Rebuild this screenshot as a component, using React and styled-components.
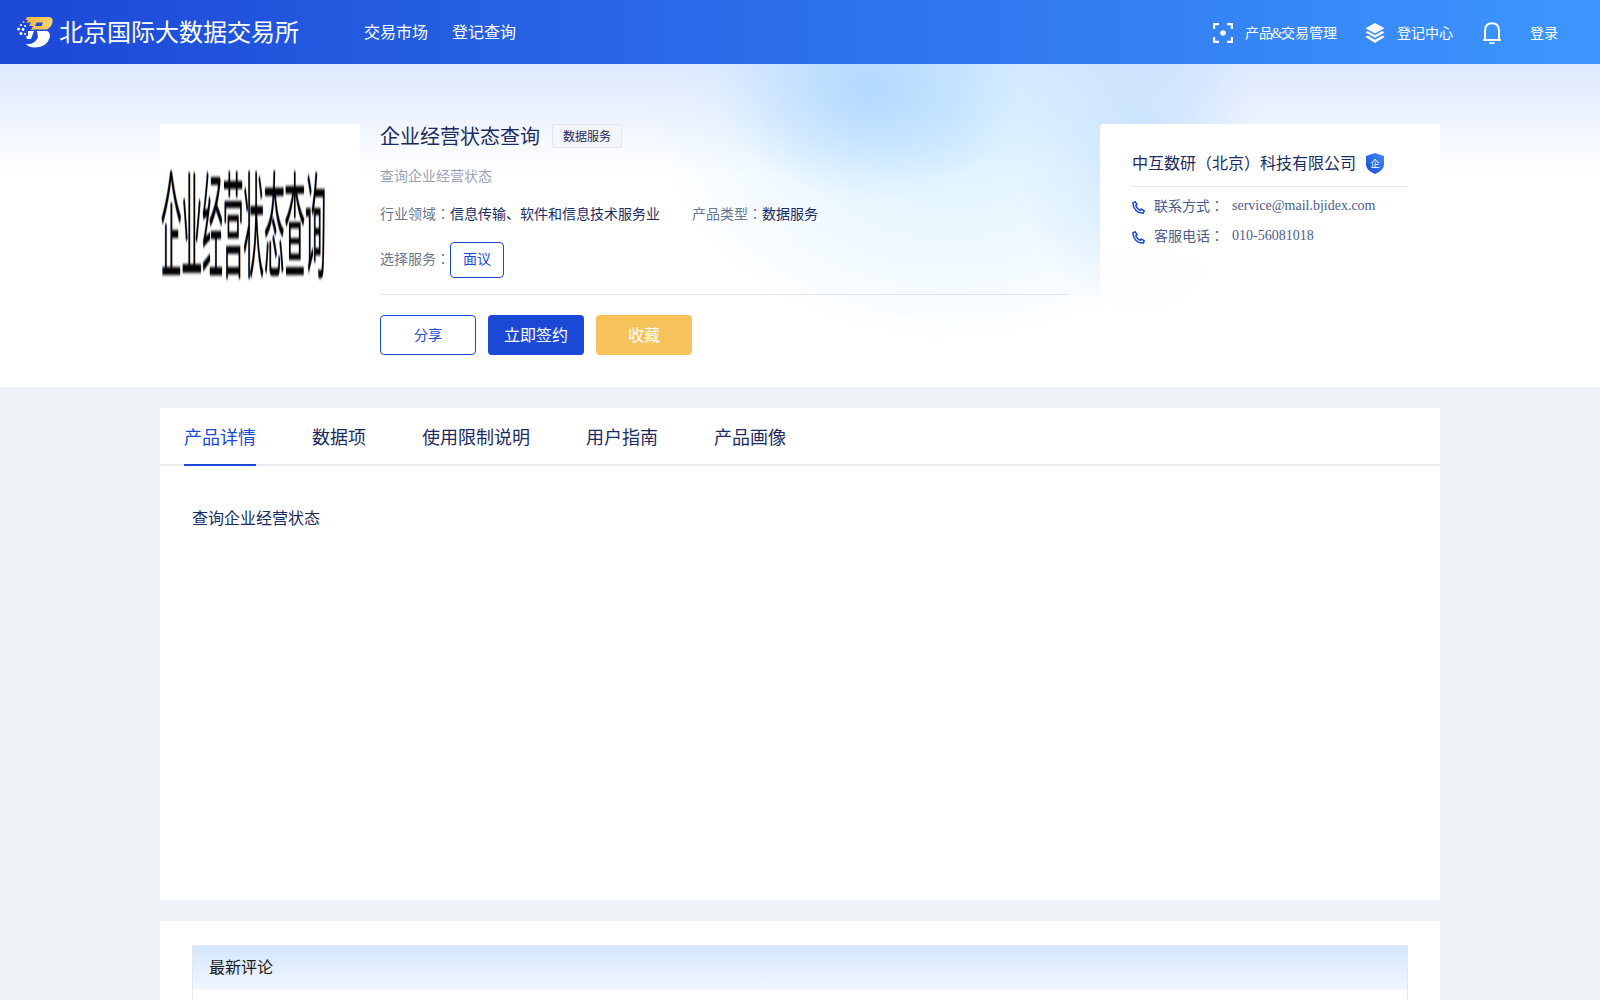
import React from "react";
import styled, { createGlobalStyle } from "styled-components";

const Global = createGlobalStyle`
  html, body { margin: 0; padding: 0; background: #eff3f8; }
  body { font-family: "Liberation Serif", "Noto Sans CJK JP", serif; overflow-x: hidden; }
  ::-webkit-scrollbar { display: none; }
`;

const Page = styled.div`
  width: 1600px;
  height: 1000px;
  overflow: hidden;
`;

const Header = styled.header`
  height: 64px;
  display: flex;
  align-items: center;
  padding: 0 42px 0 17px;
  background: linear-gradient(90deg, #1c48d6 0%, #3d96ff 100%);
  color: #fff;
`;
const Brand = styled.div`
  display: flex;
  align-items: center;
  gap: 6px;
  font-size: 24px;
  width: 347px;
`;
const BrandName = styled.span`
  padding-bottom: 4px;
`;
const Nav = styled.nav`
  display: flex;
  gap: 24px;
  font-size: 16px;
  padding-bottom: 2px;
`;
const Tools = styled.div`
  margin-left: auto;
  display: flex;
  align-items: center;
  font-size: 14px;
`;
const Tool = styled.div`
  display: flex;
  align-items: center;
  gap: 12px;
  margin-left: ${(p) => p.$left || 0}px;
  svg {
    display: block;
    margin-top: 2px;
  }
`;
const Amp = styled.span`
  margin: 0 -1.5px;
`;

const Hero = styled.section`
  height: 323px;
  box-sizing: border-box;
  padding-top: 60px;
  background:
    radial-gradient(ellipse 150px 110px at 868px 25px, rgba(170, 212, 255, 0.8), rgba(170, 212, 255, 0) 100%),
    radial-gradient(ellipse 300px 230px at 950px 50px, rgba(200, 234, 255, 0.75), rgba(200, 234, 255, 0) 100%),
    radial-gradient(ellipse 125px 165px at 1140px 90px, rgba(178, 210, 255, 0.62), rgba(178, 210, 255, 0) 100%),
    linear-gradient(180deg, #dde8fe 0%, #ffffff 34%);
`;
const HeroInner = styled.div`
  width: 1280px;
  margin: 0 auto;
  display: flex;
`;
const Cover = styled.div`
  width: 200px;
  height: 200px;
  margin-right: 20px;
  flex: none;
  background: #fff;
  border-radius: 4px;
  display: flex;
  align-items: center;
  overflow: hidden;
`;
const CoverText = styled.span`
  display: block;
  font-size: 20.6px;
  line-height: 1;
  white-space: nowrap;
  color: #000;
  font-family: "Noto Sans CJK JP", sans-serif;
  margin-left: 1px;
  transform: translateY(-4px) scale(1, 5.65);
  text-shadow: -0.4px 0 rgba(0, 110, 255, 0.45), 0.4px 0 rgba(255, 130, 0, 0.45);
  filter: blur(0.3px);
`;
const Info = styled.div`
  width: 688px;
  flex: none;
`;
const TitleRow = styled.div`
  height: 24px;
  display: flex;
  align-items: center;
  gap: 12px;
`;
const Title = styled.h1`
  margin: 0;
  padding-bottom: 2px;
  font-size: 20px;
  font-weight: 400;
  color: #1c2c63;
`;
const Tag = styled.span`
  box-sizing: border-box;
  height: 24px;
  padding: 0 10px;
  display: flex;
  align-items: center;
  font-size: 12px;
  color: #1c2c63;
  background: #f4f5f9;
  border: 1px solid #e5e7ee;
  border-radius: 2px;
`;
const Desc = styled.p`
  margin: 19px 0 0;
  height: 20px;
  line-height: 20px;
  font-size: 14px;
  color: #9aa2b8;
`;
const Meta = styled.div`
  margin-top: 18px;
  height: 20px;
  line-height: 20px;
  display: flex;
  gap: 32px;
  font-size: 14px;
  color: #6b7693;
`;
const Value = styled.span`
  color: #1c2c63;
`;
const ServiceRow = styled.div`
  margin-top: 17px;
  display: flex;
  align-items: center;
  font-size: 14px;
  color: #6b7693;
`;
const ServiceLabel = styled.span`
  padding-bottom: 4px;
`;
const Chip = styled.span`
  box-sizing: border-box;
  width: 54px;
  height: 36px;
  padding-bottom: 4px;
  display: flex;
  align-items: center;
  justify-content: center;
  border: 1px solid #1c48d6;
  border-radius: 4px;
  color: #1c48d6;
  background: #fff;
`;
const Rule = styled.div`
  height: 1px;
  margin-top: 16px;
  background: #e4e6ec;
`;
const Actions = styled.div`
  margin-top: 20px;
  display: flex;
  gap: 12px;
`;
const Action = styled.button`
  box-sizing: border-box;
  width: 96px;
  height: 40px;
  padding: 0 0 2px;
  font-family: inherit;
  font-size: ${(p) => (p.$kind === "outline" ? 14 : 16)}px;
  border-radius: 4px;
  border: ${(p) => (p.$kind === "outline" ? "1px solid #1c48d6" : "none")};
  background: ${(p) => ({ outline: "#fff", primary: "#1c48d6", gold: "#f5c35a" })[p.$kind]};
  color: ${(p) => (p.$kind === "outline" ? "#1c48d6" : "#fff")};
`;
const Company = styled.aside`
  box-sizing: border-box;
  width: 340px;
  height: 200px;
  margin-left: 32px;
  padding: 27px 32px 0;
  background: linear-gradient(180deg, #ffffff 60%, rgba(255, 255, 255, 0.6) 100%);
  border-radius: 4px;
`;
const CompanyName = styled.div`
  display: flex;
  align-items: center;
  gap: 10px;
  height: 24px;
  font-size: 16px;
  color: #1c2c63;
  padding-bottom: 11px;
  border-bottom: 1px solid #e4e6ec;
`;
const CompanyText = styled.span`
  padding-bottom: 2px;
`;
const Contact = styled.div`
  display: flex;
  align-items: center;
  height: 20px;
  margin-top: ${(p) => p.$top}px;
  font-size: 14px;
  color: #4d5c8f;
  svg {
    display: block;
    margin-top: 2px;
  }
`;
const ContactLabel = styled.span`
  margin-left: 9px;
  width: 78px;
  flex: none;
  padding-bottom: 2px;
`;

const Panel = styled.section`
  width: 1280px;
  margin: 21px auto 0;
  background: #fff;
`;
const Tabs = styled.div`
  box-sizing: border-box;
  height: 58px;
  padding-left: 24px;
  display: flex;
  gap: 56px;
  border-bottom: 2px solid #e9ebf0;
`;
const Tab = styled.div`
  height: 58px;
  box-sizing: border-box;
  line-height: 60px;
  font-size: 18px;
  color: ${(p) => (p.$active ? "#1c48d6" : "#1c2c63")};
  border-bottom: ${(p) => (p.$active ? "2px solid #1c48d6" : "none")};
`;
const Detail = styled.div`
  box-sizing: border-box;
  height: 434px;
  padding: 41px 32px 0;
  font-size: 16px;
  line-height: 24px;
  color: #1c2c63;
`;
const Comments = styled.div`
  padding: 24px 32px 0;
  height: 300px;
`;
const CommentBox = styled.div`
  box-sizing: border-box;
  height: 200px;
  border: 1px solid #e3e7ee;
  border-bottom: none;
`;
const CommentHead = styled.div`
  height: 44px;
  line-height: 44px;
  padding-left: 16px;
  font-size: 16px;
  color: #1a1a1a;
  background: linear-gradient(180deg, #d3e5fd 0%, #f1f7ff 100%);
`;

const Logo = () => (
  <svg width="36" height="31" viewBox="0 0 36 31" aria-hidden="true">
    <defs>
      <linearGradient id="lg" x1="0" y1="0" x2="1" y2="0">
        <stop offset="0" stopColor="#f0b63f" />
        <stop offset="1" stopColor="#fbd56c" />
      </linearGradient>
    </defs>
    <path
      fillRule="evenodd"
      fill="url(#lg)"
      d="M10 0H31Q36 0 35.6 4Q35 10 30 12.6H19L14 13L16 9H12L14 5.5H9L11.5 3H8.5ZM19.5 5.5L18 9H24.5L26 5.5Z"
    />
    <path
      fill="#fff"
      d="M11 14H17L14 22H10L9 19H11ZM20 14H30Q34 15.5 32.5 21Q30 30 18 30.5Q12 30.5 9 27Q18 28 21 20Z"
    />
    <g fill="#fff">
      <circle cx="6.5" cy="5" r="1" fill="#f0b63f" />
      <circle cx="4" cy="8" r="1.1" />
      <circle cx="8" cy="9" r="1" />
      <circle cx="1.6" cy="12" r="1.5" />
      <circle cx="6" cy="12.5" r="1.4" />
      <circle cx="4" cy="16.5" r="1.5" />
      <circle cx="8" cy="17" r="1" />
    </g>
  </svg>
);

const FocusIcon = () => (
  <svg width="20" height="20" viewBox="0 0 20 20" fill="none" stroke="#fff" strokeWidth="2.2" aria-hidden="true">
    <path d="M1.1 6V1.1H6M14 1.1H18.9V6M18.9 14V18.9H14M6 18.9H1.1V14" />
    <circle cx="10" cy="10" r="2.8" fill="#fff" stroke="none" />
  </svg>
);
const LayersIcon = () => (
  <svg width="20" height="20" viewBox="0 0 20 20" fill="#fff" aria-hidden="true">
    <path d="M10 0L19.5 5.2L10 10.4L.5 5.2Z" />
    <path d="M2.6 8.1L10 12.2L17.4 8.1L19.5 9.5L10 14.8L.5 9.5Z" />
    <path d="M2.6 12.6L10 16.7L17.4 12.6L19.5 14L10 20L.5 14Z" />
  </svg>
);
const BellIcon = () => (
  <svg width="20" height="22" viewBox="0 0 20 22" fill="none" stroke="#fff" strokeWidth="2" aria-hidden="true">
    <path d="M1 18H19M3 18V9Q3 1.2 10 1.2Q17 1.2 17 9V18" />
    <path d="M7.5 21H12.5" strokeWidth="1.6" />
  </svg>
);
const PhoneIcon = () => (
  <svg width="13" height="13" viewBox="0 0 13 13" fill="none" stroke="#1c48d6" strokeWidth="1.5" aria-hidden="true">
    <path d="M1 1.6L3.2.8L5 3.6L3.7 4.8Q5 8 8.2 9.3L9.4 8L12.2 9.8L11.4 12Q7 12.6 3.8 9.2Q.6 6 1 1.6Z" />
  </svg>
);
const ShieldIcon = () => (
  <svg width="18" height="21" viewBox="0 0 18 21" aria-hidden="true">
    <defs>
      <linearGradient id="sg" x1="0" y1="1" x2="1" y2="0">
        <stop offset="0" stopColor="#1c48d6" />
        <stop offset="1" stopColor="#3d8ff5" />
      </linearGradient>
    </defs>
    <path fill="url(#sg)" d="M9 0L18 3V12Q18 17 9 21Q0 17 0 12V3Z" />
    <text x="9" y="14" textAnchor="middle" fontSize="9.5" fill="#fff" fontFamily="Noto Sans CJK JP, sans-serif">
      企
    </text>
  </svg>
);

export default function App() {
  return (
    <Page>
      <Global />
      <Header>
        <Brand>
          <Logo />
          <BrandName>北京国际大数据交易所</BrandName>
        </Brand>
        <Nav>
          <span>交易市场</span>
          <span>登记查询</span>
        </Nav>
        <Tools>
          <Tool>
            <FocusIcon />
            <span>
              产品<Amp>&</Amp>交易管理
            </span>
          </Tool>
          <Tool $left={28}>
            <LayersIcon />
            <span>登记中心</span>
          </Tool>
          <Tool $left={29}>
            <BellIcon />
          </Tool>
          <Tool $left={28}>
            <span>登录</span>
          </Tool>
        </Tools>
      </Header>
      <Hero>
        <HeroInner>
          <Cover>
            <CoverText>企业经营状态查询</CoverText>
          </Cover>
          <Info>
            <TitleRow>
              <Title>企业经营状态查询</Title>
              <Tag>数据服务</Tag>
            </TitleRow>
            <Desc>查询企业经营状态</Desc>
            <Meta>
              <span>
                行业领域：<Value>信息传输、软件和信息技术服务业</Value>
              </span>
              <span>
                产品类型：<Value>数据服务</Value>
              </span>
            </Meta>
            <ServiceRow>
              <ServiceLabel>选择服务：</ServiceLabel>
              <Chip>面议</Chip>
            </ServiceRow>
            <Rule />
            <Actions>
              <Action $kind="outline">分享</Action>
              <Action $kind="primary">立即签约</Action>
              <Action $kind="gold">收藏</Action>
            </Actions>
          </Info>
          <Company>
            <CompanyName>
              <CompanyText>中互数研（北京）科技有限公司</CompanyText>
              <ShieldIcon />
            </CompanyName>
            <Contact $top={9}>
              <PhoneIcon />
              <ContactLabel>联系方式：</ContactLabel>
              <span>service@mail.bjidex.com</span>
            </Contact>
            <Contact $top={10}>
              <PhoneIcon />
              <ContactLabel>客服电话：</ContactLabel>
              <span>010-56081018</span>
            </Contact>
          </Company>
        </HeroInner>
      </Hero>
      <Panel>
        <Tabs>
          <Tab $active>产品详情</Tab>
          <Tab>数据项</Tab>
          <Tab>使用限制说明</Tab>
          <Tab>用户指南</Tab>
          <Tab>产品画像</Tab>
        </Tabs>
        <Detail>查询企业经营状态</Detail>
      </Panel>
      <Panel>
        <Comments>
          <CommentBox>
            <CommentHead>最新评论</CommentHead>
          </CommentBox>
        </Comments>
      </Panel>
    </Page>
  );
}
